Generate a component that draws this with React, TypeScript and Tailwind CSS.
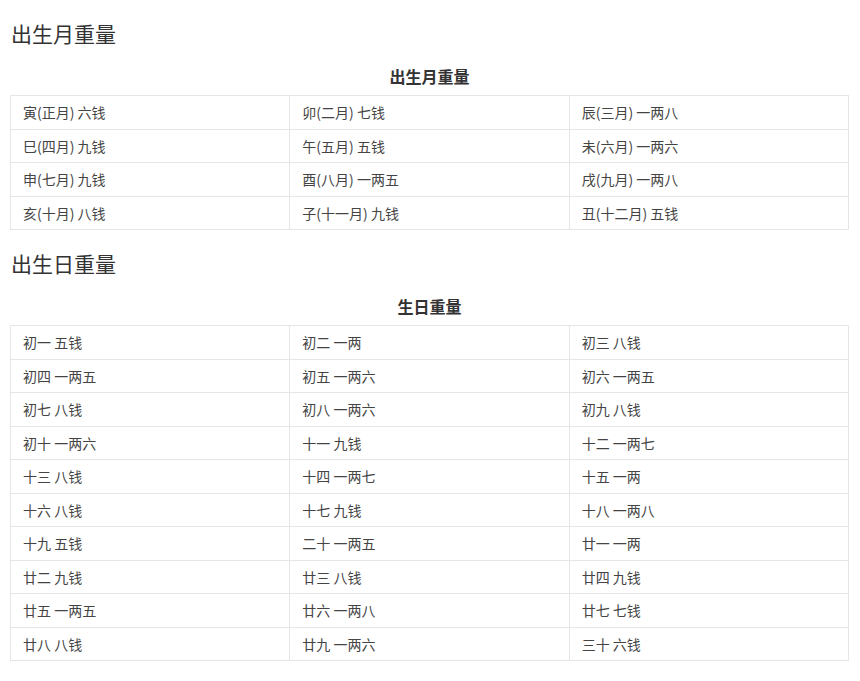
const months = [
  ['寅(正月) 六钱', '卯(二月) 七钱', '辰(三月) 一两八'],
  ['巳(四月) 九钱', '午(五月) 五钱', '未(六月) 一两六'],
  ['申(七月) 九钱', '酉(八月) 一两五', '戌(九月) 一两八'],
  ['亥(十月) 八钱', '子(十一月) 九钱', '丑(十二月) 五钱'],
];

const days = [
  ['初一 五钱', '初二 一两', '初三 八钱'],
  ['初四 一两五', '初五 一两六', '初六 一两五'],
  ['初七 八钱', '初八 一两六', '初九 八钱'],
  ['初十 一两六', '十一 九钱', '十二 一两七'],
  ['十三 八钱', '十四 一两七', '十五 一两'],
  ['十六 八钱', '十七 九钱', '十八 一两八'],
  ['十九 五钱', '二十 一两五', '廿一 一两'],
  ['廿二 九钱', '廿三 八钱', '廿四 九钱'],
  ['廿五 一两五', '廿六 一两八', '廿七 七钱'],
  ['廿八 八钱', '廿九 一两六', '三十 六钱'],
];

const WeightTable = ({ caption, rows }: { caption: string; rows: string[][] }) => {
  return (
    <table className="w-[839px] border-collapse table-fixed">
      <caption className="pt-[20px] pb-[9px] text-[16px] leading-[20px] font-bold text-[#333]">
        {caption}
      </caption>
      <tbody>
        {rows.map((row, i) => (
          <tr key={i} className="h-[33.5px]">
            {row.map((cell) => (
              <td
                key={cell}
                className="border border-[#e6e6e6] px-[12px] py-0 text-[14px] leading-[20px] text-[#444] align-middle"
              >
                {cell}
              </td>
            ))}
          </tr>
        ))}
      </tbody>
    </table>
  );
};

export default function App() {
  return (
    <div
      className="bg-white min-h-[681px] px-[10px]"
      style={{ fontFamily: '"Noto Sans CJK SC", "Noto Sans", sans-serif' }}
    >
      <h2 className="pt-[20px] pl-[1px] text-[21px] leading-[26px] font-normal text-[#333]">出生月重量</h2>
      <WeightTable caption="出生月重量" rows={months} />
      <h2 className="pt-[20px] pl-[1px] text-[21px] leading-[26px] font-normal text-[#333]">出生日重量</h2>
      <WeightTable caption="生日重量" rows={days} />
    </div>
  );
}
